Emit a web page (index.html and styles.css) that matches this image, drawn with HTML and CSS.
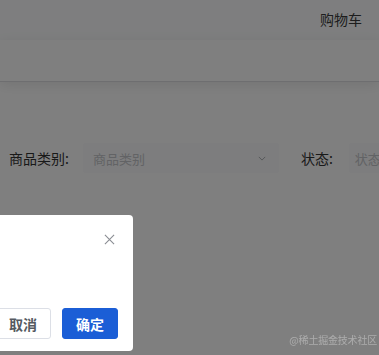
FILE: index.html
```html
<!DOCTYPE html>
<html lang="zh-CN">
<head>
<meta charset="utf-8">
<title>商品管理</title>
<link rel="stylesheet" href="styles.css">
</head>
<body>
<div class="page">
  <header class="header">
    <span class="nav-link">购物车</span>
  </header>
  <div class="subbar"></div>
  <main class="content">
    <form class="filter">
      <label class="field-label">商品类别:</label>
      <div class="select select-wide">
        <span class="placeholder">商品类别</span>
        <svg class="chevron" viewBox="0 0 10 6" width="8" height="5"><path d="M1 1l4 4 4-4" fill="none" stroke="currentColor" stroke-width="1.2"/></svg>
      </div>
      <label class="field-label field-label-2">状态:</label>
      <div class="select select-narrow">
        <span class="placeholder">状态</span>
      </div>
    </form>
  </main>
</div>
<div class="mask"></div>
<div class="dialog">
  <div class="dialog-head">
    <svg class="close" viewBox="0 0 12 12" width="11" height="11"><path d="M1 1l10 10M11 1L1 11" stroke="currentColor" stroke-width="1.2" fill="none"/></svg>
  </div>
  <div class="dialog-body"></div>
  <div class="dialog-foot">
    <button class="btn btn-default" type="button">取消</button>
    <button class="btn btn-primary" type="button">确定</button>
  </div>
</div>
<div class="watermark">@稀土掘金技术社区</div>
</body>
</html>
```

FILE: styles.css
```css
* { box-sizing: border-box; }
html, body {
  margin: 0;
  padding: 0;
  width: 379px;
  height: 355px;
  overflow: hidden;
  font-family: "Noto Sans CJK SC", "Noto Sans", sans-serif;
  background: #ffffff;
}
.page {
  height: 355px;
  background: #ffffff;
}
.header {
  height: 40px;
  display: flex;
  align-items: center;
  justify-content: flex-end;
  padding-right: 17px;
  background: #fcfdfe;
}
.nav-link {
  font-size: 14px;
  color: #3a3a3a;
  line-height: 20px;
  margin-top: -2px;
}
.subbar {
  height: 42px;
  background: #ffffff;
  border-bottom: 1px solid #dcdde0;
  box-shadow: 0 3px 12px rgba(0, 0, 0, 0.09);
  position: relative;
}
.content {
  padding: 61px 0 0 9px;
}
.filter {
  display: flex;
  align-items: center;
  margin: 0;
  white-space: nowrap;
}
.field-label {
  font-size: 14px;
  color: #333333;
  line-height: 20px;
  margin-right: 14px;
}
.field-label-2 {
  margin-left: 22px;
  margin-right: 16px;
}
.select {
  height: 30px;
  background: #fbfbfc;
  border-radius: 2px;
  display: flex;
  align-items: center;
  padding-left: 10px;
  padding-right: 12px;
  flex-shrink: 0;
}
.select-wide {
  width: 196px;
  justify-content: space-between;
}
.select-narrow {
  width: 120px;
  padding-left: 6px;
}
.placeholder {
  font-size: 13px;
  color: #c4c6ca;
}
.chevron {
  color: #a8abb2;
  margin-right: 1px;
}
.mask {
  position: fixed;
  inset: 0;
  background: rgba(0, 0, 0, 0.5);
}
.dialog {
  position: fixed;
  left: -200px;
  top: 215px;
  width: 333px;
  height: 136px;
  background: #ffffff;
  border-radius: 4px;
  display: flex;
  flex-direction: column;
  padding: 18px 15px 12px 20px;
}
.dialog-head {
  display: flex;
  justify-content: flex-end;
  height: 14px;
  padding-right: 3px;
}
.close {
  color: #8a8d93;
  margin-top: 1px;
}
.dialog-body {
  flex: 1;
}
.dialog-foot {
  display: flex;
  justify-content: flex-end;
  gap: 11px;
}
.btn {
  width: 56px;
  height: 31px;
  border-radius: 3px;
  font-family: "Noto Sans CJK SC", sans-serif;
  font-size: 14px;
  font-weight: 600;
  display: flex;
  align-items: center;
  justify-content: center;
  padding: 0;
  cursor: pointer;
}
.btn-default {
  background: #ffffff;
  border: 1px solid #dcdfe6;
  color: #555a61;
}
.btn-primary {
  background: #1b5ed6;
  border: 1px solid #1b5ed6;
  color: #ffffff;
}
.watermark {
  position: fixed;
  right: 2px;
  bottom: 9px;
  font-size: 10px;
  line-height: 12px;
  color: rgba(255, 255, 255, 0.35);
  letter-spacing: -0.2px;
}
```
